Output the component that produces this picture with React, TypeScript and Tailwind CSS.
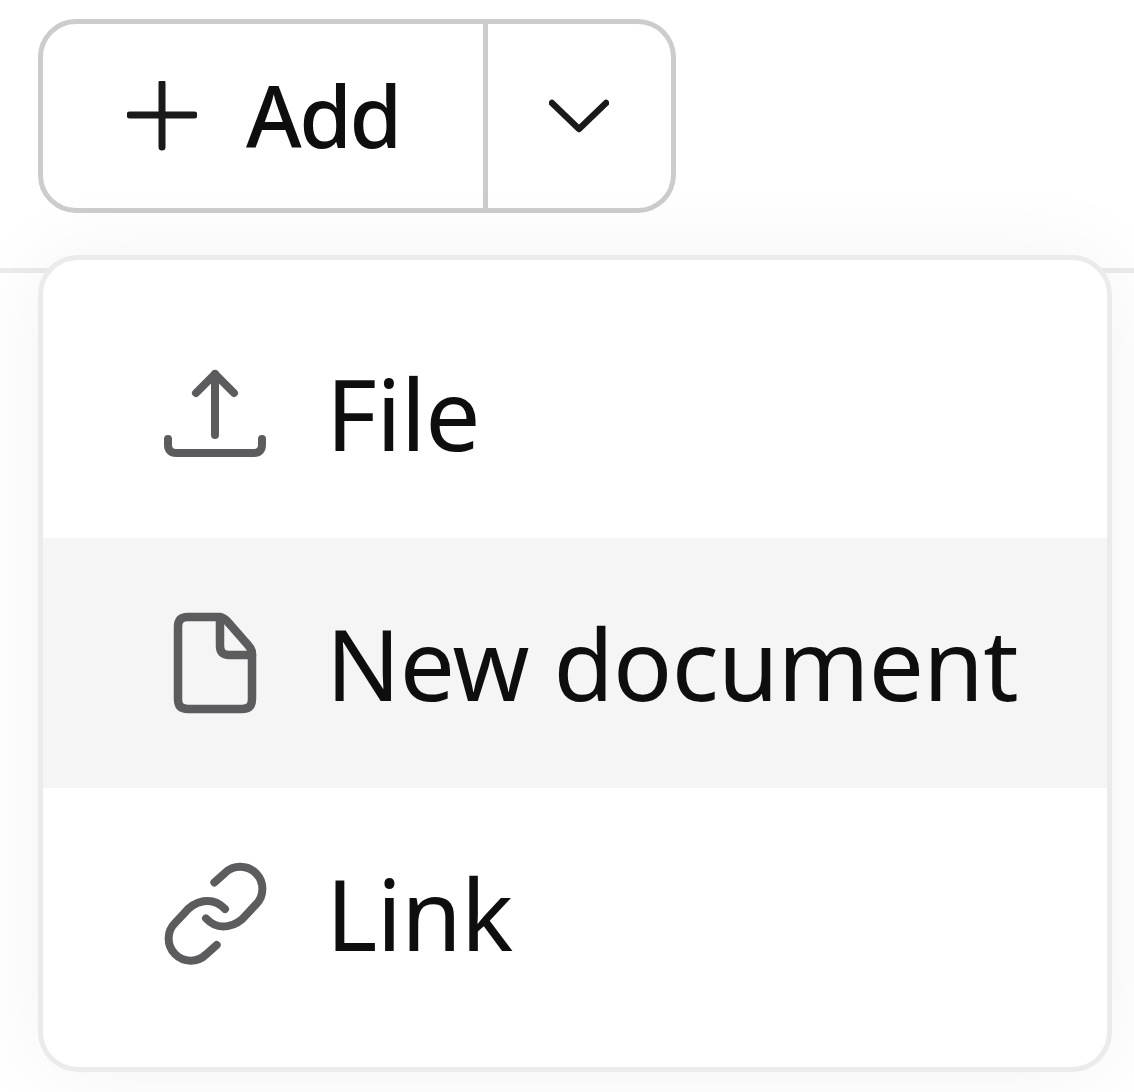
const UploadIcon = () => (
    <svg viewBox="0 -2 150 130" className="w-[150px] h-[130px] shrink-0" fill="none" stroke="#5c5c5e" strokeWidth="8" strokeLinecap="round" strokeLinejoin="round">
        <path d="M75 24V85" />
        <path d="M56 43L75 24L94 43" />
        <path d="M28 89V95C28 100 31 103 36 103H114C119 103 122 100 122 95V89" />
    </svg>
);

const DocumentIcon = () => (
    <svg viewBox="0 -2 150 130" className="w-[150px] h-[130px] shrink-0" fill="none" stroke="#5c5c5e" strokeWidth="8.500" strokeLinecap="round" strokeLinejoin="round">
        <path d="M48 17H78C82 17 84 18 87 21L108 45C111 48 112 50 112 54V99C112 106 109 109 102 109H48C41 109 38 106 38 99V27C38 20 41 17 48 17Z" />
        <path d="M80 17V46C80 52 83 55 89 55H112" />
    </svg>
);

const LinkIcon = () => (
    <svg viewBox="0 -2 150 130" className="w-[150px] h-[130px] shrink-0" fill="none" stroke="#5c5c5e" strokeWidth="8" strokeLinecap="round" strokeLinejoin="round">
        <path d="M74.300 32.400L85 22.900A22.100 22.100 0 0 1 116 54.400L107 63.900C97 76.400 79 82.400 66 68.400" />
        <path d="M76.700 95L66 104.500A22.100 22.100 0 0 1 35 73L44 63.500C54 51 72 45 85 59" />
    </svg>
);

const MenuItem = ({ icon, label, active }: { icon: React.ReactNode; label: string; active?: boolean }) => (
    <div className={`flex items-center h-[250px] pl-[97px] ${active ? 'bg-[#f5f5f5]' : ''}`}>
        {icon}
        <span className="ml-[36px] text-[98px] leading-none tracking-[-0.7px] text-[#0e0e0e]">{label}</span>
    </div>
);

export default function App() {
    return (
        <div className="relative w-[1134px] h-[1092px] overflow-hidden bg-white pt-[19px] font-['Noto_Sans',sans-serif]">
            <div className="flex ml-[38px] w-[638px] h-[194px]">
                <button className="flex items-center w-[450px] pl-[84px] border-[5px] border-[#cccccc] rounded-l-[38px] bg-white">
                    <svg viewBox="0 0 70 70" className="w-[70px] h-[70px] shrink-0" fill="none" stroke="#1a1a1a" strokeWidth="7" strokeLinecap="round">
                        <path d="M35 2V66" />
                        <path d="M3 34H67" />
                    </svg>
                    <span className="ml-[49px] -mt-[2px] text-[85px] leading-none font-medium tracking-[-2.500px] text-[#0e0e0e]">Add</span>
                </button>
                <button className="flex items-center justify-center flex-1 border-[5px] border-l-0 border-[#cccccc] rounded-r-[38px] bg-white">
                    <svg viewBox="0 0 60 34" className="w-[60px] h-[34px] -ml-[2px]" fill="none" stroke="#1a1a1a" strokeWidth="6.500" strokeLinecap="round" strokeLinejoin="round">
                        <path d="M3 4L30 30L57 4" />
                    </svg>
                </button>
            </div>

            <div className="mt-[55px] h-[5px] bg-[#ebebeb]" />

            {/* dropdown sits over the rule */}
            <div className="absolute left-[38px] top-[255px] w-[1074px] h-[817px] py-7 overflow-hidden bg-white border-[5px] border-[#ebebeb] rounded-[40px] shadow-[0_0_90px_rgba(0,0,0,0.05)]">
                <MenuItem icon={<UploadIcon />} label="File" />
                <MenuItem icon={<DocumentIcon />} label="New document" active />
                <MenuItem icon={<LinkIcon />} label="Link" />
            </div>
        </div>
    );
}
